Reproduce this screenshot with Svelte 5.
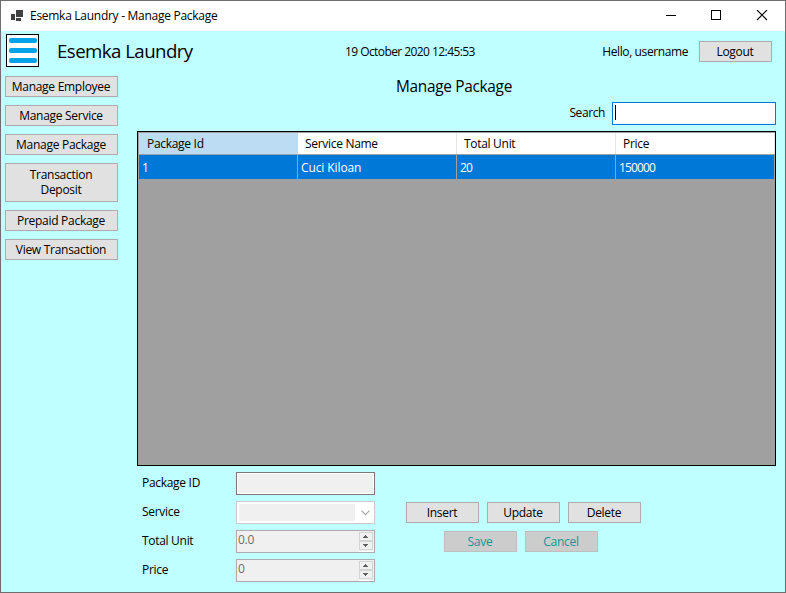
<script>
  const menu = ['Manage Employee', 'Manage Service', 'Manage Package', 'Transaction Deposit', 'Prepaid Package', 'View Transaction'];
  const columns = ['Package Id', 'Service Name', 'Total Unit', 'Price'];
  const rows = [['1', 'Cuci Kiloan', '20', '150000']];
</script>

{#snippet spinner(value)}
  <div class="field spin">
    <span class="value">{value}</span>
    <div class="arrows">
      <i><svg width="5" height="3" viewBox="0 0 5 3" shape-rendering="crispEdges"><path d="M2 0h1v1h1v1h1v1H0V2h1V1h1z" fill="#606060" /></svg></i>
      <i><svg width="5" height="3" viewBox="0 0 5 3" shape-rendering="crispEdges"><path d="M0 0h5v1H4v1H3v1H2V2H1V1H0z" fill="#606060" /></svg></i>
    </div>
  </div>
{/snippet}

<div class="window">
  <div class="titlebar">
    <svg class="app-icon" width="12" height="12" viewBox="0 0 12 12" shape-rendering="crispEdges">
      <path d="M5 0h7v7H5zM0 4h4v6H0zM5 8h5v3H5z" fill="#404040" />
    </svg>
    <span class="caption">Esemka Laundry - Manage Package</span>
    <svg class="controls" width="102" height="12" viewBox="0 0 102 12" fill="none" stroke="#000">
      <path d="M0 5.5h10M45.5 .5h9v9h-9z" shape-rendering="crispEdges" />
      <path d="M91 0l10 10M101 0L91 10" stroke-width="1.1" />
    </svg>
  </div>

  <header>
    <div class="burger"><b></b><b></b><b></b></div>
    <h1>Esemka Laundry</h1>
    <span class="clock">19 October 2020 12:45:53</span>
    <span class="hello">Hello, username</span>
    <button class="logout">Logout</button>
  </header>

  <div class="body">
    <nav>
      {#each menu as item}
        <button class:tall={item === 'Transaction Deposit'}>{item}</button>
      {/each}
    </nav>

    <main>
      <h2>Manage Package</h2>
      <div class="search">
        <span>Search</span>
        <div class="search-box"><i class="caret"></i></div>
      </div>

      <div class="grid">
        <div class="row head">
          {#each columns as c, i}<div class:current={i === 0}>{c}</div>{/each}
        </div>
        {#each rows as r}
          <div class="row data">
            {#each r as cell}<div class:number={!isNaN(Number(cell))}>{cell}</div>{/each}
          </div>
        {/each}
      </div>

      <div class="editor">
        <div class="form">
          <span>Package ID</span>
          <div class="field id"></div>
          <span>Service</span>
          <div class="field combo">
            <div class="combo-fill"></div>
            <svg width="9" height="6" viewBox="0 0 9 6" fill="none" stroke="#a6a6a6" stroke-width="1.1"><path d="M.5 .7l4 4 4-4" /></svg>
          </div>
          <span>Total Unit</span>
          {@render spinner('0.0')}
          <span>Price</span>
          {@render spinner('0')}
        </div>
        <div class="actions">
          <div class="line">
            <button>Insert</button><button>Update</button><button>Delete</button>
          </div>
          <div class="line second">
            <button disabled>Save</button><button disabled>Cancel</button>
          </div>
        </div>
      </div>
    </main>
  </div>
</div>

<style>
  :global(body) { background: #c0ffff; overflow: hidden; }
  * { box-sizing: border-box; }
  .window {
    width: 786px; height: 593px; border: 1px solid #6e6e6e; background: #c0ffff;
    display: flex; flex-direction: column; overflow: hidden;
    font: 12px/15px "Open Sans", "Noto Sans", sans-serif; letter-spacing: -.3px; color: #000; white-space: nowrap;
  }
  .titlebar { height: 30px; background: #fff; display: flex; align-items: center; padding-left: 10px; flex: none; }
  .app-icon { margin-top: -1px; }
  .caption { margin-left: 7px; padding-bottom: 1px; letter-spacing: -.28px; }
  .controls { margin-left: auto; margin-right: 17px; }

  header { display: flex; height: 40px; align-items: center; padding: 0 13px 0 5px; flex: none; }
  .burger {
    width: 33px; height: 33px; margin-top: -1px; border: 1px solid #000; background: #fff;
    display: flex; flex-direction: column; align-items: center; gap: 5px; padding-top: 3px; flex: none;
  }
  .burger b { width: 28px; height: 5px; border-radius: 2px; background: #00a2e8; }
  h1 { margin: 0 0 0 18px; width: 288px; font-size: 18.7px; line-height: 26px; font-weight: 400; letter-spacing: -.57px; }
  .clock { width: 200px; letter-spacing: -.57px; }
  .hello { margin-left: auto; margin-right: 11px; letter-spacing: -.4px; }

  button {
    width: 73px; height: 21px; padding: 0 1px 0 0; border: 1px solid #adadad; border-radius: 0; background: #e1e1e1;
    color: #000; font: inherit; letter-spacing: -.28px; line-height: 15px; flex: none;
  }
  button:disabled { background: #ccc; border-color: #bfbfbf; color: #109696; }

  .body { display: flex; flex: 1; padding: 0 10px 0 4px; }
  nav { width: 113px; margin-right: 19px; padding-top: 5px; display: flex; flex-direction: column; gap: 8px; }
  nav button { width: 113px; }
  nav .tall { height: 39px; white-space: normal; padding: 0 23px 1px 22px; }
  main { width: 639px; }
  h2 { margin: 0 5px 0 0; height: 31px; padding-top: 5px; text-align: center; font-size: 15.4px; line-height: 22px; font-weight: 400; letter-spacing: -.3px; }
  .search { height: 23px; display: flex; justify-content: flex-end; align-items: center; gap: 7px; letter-spacing: -.4px; }
  .search span { padding-bottom: 2px; }
  .search-box { width: 164px; height: 23px; border: 1px solid #0078d7; background: #fff; padding: 2px; }
  .caret { display: block; width: 1px; height: 15px; background: #000; }

  .grid { margin-top: 6px; height: 335px; border: 1px solid #000; background: #a0a0a0; padding: 1px; }
  .row { display: flex; }
  .row div { width: 159px; border-right: 1px solid #a0a0a0; display: flex; align-items: center; flex: none; }
  .head { height: 22px; border-bottom: 1px solid #a0a0a0; background: #fff; }
  .head div { padding-left: 7px; border-right-color: #e5e5e5; }
  .head div.current { background: #bcdcf4; border-right-color: #bcdcf4; padding-left: 8px; }
  .data { height: 25px; background: #0078d7; color: #fff; border-bottom: 1px solid #a0a0a0; }
  .data div { padding-left: 3px; letter-spacing: -.1px; }
  .data .number { letter-spacing: -.85px; }

  .editor { display: flex; padding-top: 6px; }
  .form { display: grid; grid-template-columns: 94px 139px; grid-auto-rows: 23px; row-gap: 6px; align-items: center; padding-left: 5px; margin-right: 31px; }
  .form > span { padding-bottom: 2px; }
  .field { height: 23px; background: #f0f0f0; border: 1px solid #adadad; display: flex; }
  .id { border-color: #7a7a7a; box-shadow: inset 0 0 0 1px #fff; }
  .combo { background: #fff; border-color: #ccc; padding: 2px 4px 2px 2px; align-items: center; justify-content: space-between; }
  .combo-fill { width: 116px; height: 17px; background: #f0f0f0; }
  .spin { justify-content: space-between; color: #6d6d6d; padding: 1px; }
  .form .value { line-height: 15px; }
  .arrows { width: 14px; height: 18px; display: flex; flex-direction: column; box-shadow: 0 1px #f0f0f0, 0 2px #fff; }
  .arrows i { height: 9px; border: 1px solid #d4d4d4; display: flex; align-items: center; justify-content: center; padding-right: 1px; }

  .actions { padding-top: 30px; display: flex; flex-direction: column; gap: 8px; }
  .line { display: flex; gap: 8px; }
  .second { margin-left: 38px; }
</style>
